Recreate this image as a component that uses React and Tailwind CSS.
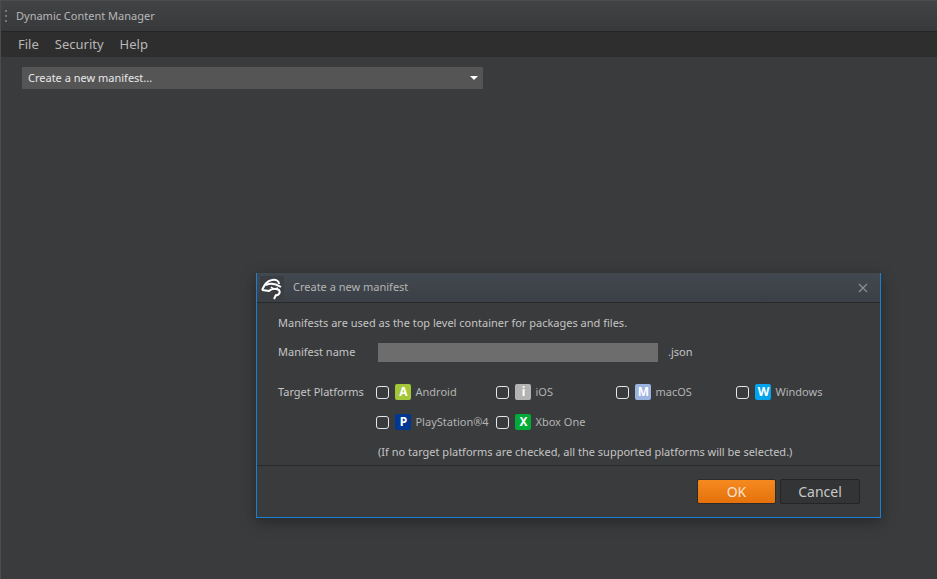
const platforms = [
  { name: "Android", letter: "A", color: "bg-[#a4c639]" },
  { name: "iOS", letter: "i", color: "bg-[#b3b3b3]" },
  { name: "macOS", letter: "M", color: "bg-[#9db4e0]" },
  { name: "Windows", letter: "W", color: "bg-[#00a4ef]" },
  { name: "PlayStation®4", letter: "P", color: "bg-[#003791]" },
  { name: "Xbox One", letter: "X", color: "bg-[#00ab38]" },
];

function Platform({ item }) {
  return (
    <label className="flex h-[30px] w-[120px] items-center whitespace-nowrap">
      <span className="h-[13px] w-[13px] rounded-[3px] border border-[#e6e6e6]" />
      <span
        className={`ml-[6px] flex h-4 w-4 items-center justify-center rounded-[2px] text-[12px] font-bold text-white ${item.color}`}
      >
        {item.letter}
      </span>
      <span className="ml-1 text-[#b4b4b4]">{item.name}</span>
    </label>
  );
}

function Logo() {
  return (
    <svg width="24" height="24" viewBox="0 0 24 24" fill="none" stroke="white" strokeWidth="2" className="bg-[#3a3e43]">
      <path d="M2 14 C4 10 6 5 12 4 C16 3 19 5 19 8" />
      <path d="M6 9 C10 7 16 8 21 11" />
      <path d="M2 14 L9 15 C11 13 15 12 19 14 C21 17 18 20 15 19" />
      <path d="M11 11 C13 13 16 13 18 12" strokeWidth="1.5" />
      <path d="M14 23 L16 19" />
    </svg>
  );
}

export default function App() {
  return (
    <div className="relative h-[579px] w-[937px] overflow-hidden border-l border-t border-[#4c4c4c] bg-[#3a3b3d] font-['Noto_Sans','Open_Sans',sans-serif] text-[11px] text-[#c4c4c4]">
      <div className="flex h-[31px] items-center bg-gradient-to-b from-[#414345] to-[#38393b] border-b border-[#252525]">
        <div className="ml-1 flex flex-col gap-[3px]">
          <span className="h-[2px] w-[2px] bg-[#777]" />
          <span className="h-[2px] w-[2px] bg-[#777]" />
          <span className="h-[2px] w-[2px] bg-[#777]" />
        </div>
        <span className="ml-[9px] text-[#b8b8b8]">Dynamic Content Manager</span>
      </div>
      <div className="flex h-[25px] items-center gap-4 bg-[#2e2e2e] pl-[17px] text-[13px] text-[#b8b8b8]">
        <span>File</span>
        <span>Security</span>
        <span>Help</span>
      </div>
      <div className="ml-[21px] mt-[10px] flex h-[22px] w-[461px] items-center justify-between bg-[#555555] pl-[6px] pr-[3px] text-[#e8e8e8]">
        <span>Create a new manifest...</span>
        <span className="mr-[0px] h-0 w-0 border-x-[4px] border-t-[4px] border-x-transparent border-t-white mr-[2px]" />
      </div>

      <div className="absolute left-[255px] top-[272px] w-[625px] border-x border-b border-[#1c7fd6] bg-[#3a3b3d] shadow-[0_4px_14px_rgba(0,0,0,0.35)]">
        <div className="flex h-[30px] items-center border-b border-[#27282a] bg-gradient-to-b from-[#42484f] to-[#3b4047] pl-[3px] pr-3">
          <Logo />
          <span className="ml-[9px] flex-1 text-[#b4b4b4]">Create a new manifest</span>
          <svg width="10" height="10" viewBox="0 0 10 10" stroke="#8a9097" strokeWidth="1.2">
            <path d="M1 1 L9 9 M9 1 L1 9" />
          </svg>
        </div>
        <div className="px-[21px] pt-[11px] pb-[5px]">
          <p className="leading-[17px]">Manifests are used as the top level container for packages and files.</p>
          <div className="mt-[12px] flex items-center">
            <span className="w-[100px]">Manifest name</span>
            <div className="h-[19px] w-[280px] bg-[#6d6d6d]" />
            <span className="ml-[10px]">.json</span>
          </div>
          <div className="mt-[15px] flex">
            <span className="w-[100px] pt-[7px]">Target Platforms</span>
            <div className="flex w-[490px] flex-wrap">
              {platforms.map((item) => (
                <Platform key={item.name} item={item} />
              ))}
            </div>
          </div>
          <p className="ml-[100px] mt-[7px] leading-[16px]">(If no target platforms are checked, all the supported platforms will be selected.)</p>
        </div>
        <div className="flex h-[52px] items-center justify-end gap-1 border-t border-[#2a2a2a] pr-[20px]">
          <button className="h-[25px] w-[79px] rounded-[2px] border border-[#2b2b2b] bg-gradient-to-b from-[#f58a1f] to-[#e5710a] text-[14px] text-[#f2e4d6]">OK</button>
          <button className="h-[25px] w-[80px] rounded-[2px] border border-[#252525] bg-[#333436] text-[14px] text-[#c8c8c8]">Cancel</button>
        </div>
      </div>
    </div>
  );
}
